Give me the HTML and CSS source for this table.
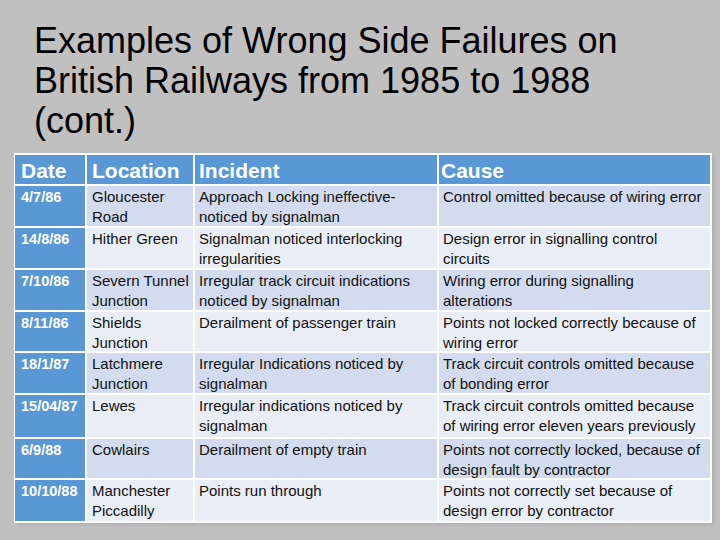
FILE: index.html
```html
<!DOCTYPE html>
<html>
<head>
<meta charset="utf-8">
<link rel="stylesheet" href="styles.css">
</head>
<body>
<div class="slide">
  <h1 class="title">Examples of Wrong Side Failures on British Railways from 1985 to 1988 (cont.)</h1>
  <div class="grid">
    <div class="hd c-date">Date</div>
    <div class="hd c-loc">Location</div>
    <div class="hd c-inc">Incident</div>
    <div class="hd c-cause">Cause</div>

    <div class="dt">4/7/86</div>
    <div class="cell b1 c-loc">Gloucester Road</div>
    <div class="cell b1 c-inc">Approach Locking ineffective-noticed by signalman</div>
    <div class="cell b1 c-cause">Control omitted because of wiring error</div>

    <div class="dt">14/8/86</div>
    <div class="cell b2 c-loc">Hither Green</div>
    <div class="cell b2 c-inc">Signalman noticed interlocking irregularities</div>
    <div class="cell b2 c-cause">Design error in signalling control circuits</div>

    <div class="dt">7/10/86</div>
    <div class="cell b1 c-loc">Severn Tunnel Junction</div>
    <div class="cell b1 c-inc">Irregular track circuit indications noticed by signalman</div>
    <div class="cell b1 c-cause">Wiring error during signalling alterations</div>

    <div class="dt">8/11/86</div>
    <div class="cell b2 c-loc">Shields Junction</div>
    <div class="cell b2 c-inc">Derailment of passenger train</div>
    <div class="cell b2 c-cause">Points not locked correctly because of wiring error</div>

    <div class="dt">18/1/87</div>
    <div class="cell b1 c-loc">Latchmere Junction</div>
    <div class="cell b1 c-inc">Irregular Indications noticed by signalman</div>
    <div class="cell b1 c-cause">Track circuit controls omitted because of bonding error</div>

    <div class="dt">15/04/87</div>
    <div class="cell b2 c-loc">Lewes</div>
    <div class="cell b2 c-inc">Irregular indications noticed by signalman</div>
    <div class="cell b2 c-cause">Track circuit controls omitted because of wiring error eleven years previously</div>

    <div class="dt">6/9/88</div>
    <div class="cell b1 c-loc">Cowlairs</div>
    <div class="cell b1 c-inc">Derailment of empty train</div>
    <div class="cell b1 c-cause">Points not correctly locked, because of design fault by contractor</div>

    <div class="dt">10/10/88</div>
    <div class="cell b2 c-loc">Manchester Piccadilly</div>
    <div class="cell b2 c-inc">Points run through</div>
    <div class="cell b2 c-cause">Points not correctly set because of design error by contractor</div>
  </div>
</div>
</body>
</html>
```

FILE: styles.css
```css
html, body {
  margin: 0;
  padding: 0;
}
body {
  background: #c0c0c0;
  font-family: "Liberation Sans", Arial, sans-serif;
}
.slide {
  width: 720px;
  height: 540px;
  overflow: hidden;
  padding-top: 21px;
  box-sizing: border-box;
}
.title {
  margin: 0 0 12px 34px;
  width: 600px;
  font-size: 36px;
  line-height: 40px;
  font-weight: normal;
  color: #000;
}
.grid {
  margin-left: 14px;
  width: 698px;
  box-sizing: border-box;
  background: #ffffff;
  padding: 2px 2px 2px 1px;
  display: grid;
  grid-template-columns: 70px 106px 242px 271px;
  grid-template-rows: 29px 40px 40px 40px 39px 40px 42px 39px 41px;
  gap: 2px;
  box-shadow: 3px 2px 3px rgba(0, 0, 0, 0.08);
}
.hd {
  background: #5a97d5;
  color: #fff;
  font-weight: bold;
  font-size: 21px;
  line-height: 29px;
  padding-top: 1px;
  padding-left: 6px;
}
.hd.c-inc { padding-left: 4px; }
.hd.c-cause { padding-left: 2px; }
.dt {
  background: #5a97d5;
  color: #fff;
  font-weight: bold;
  font-size: 14.5px;
  line-height: 20px;
  padding: 1px 0 0 6px;
}
.cell {
  color: #111;
  font-size: 15px;
  line-height: 20px;
  padding-top: 1px;
  overflow: hidden;
}
.b1 { background: #d2dcee; }
.b2 { background: #e9edf6; }
.c-loc { padding-left: 5px; }
.c-inc { padding-left: 4px; padding-right: 4px; }
.c-cause { padding-left: 4px; padding-right: 6px; }
```
